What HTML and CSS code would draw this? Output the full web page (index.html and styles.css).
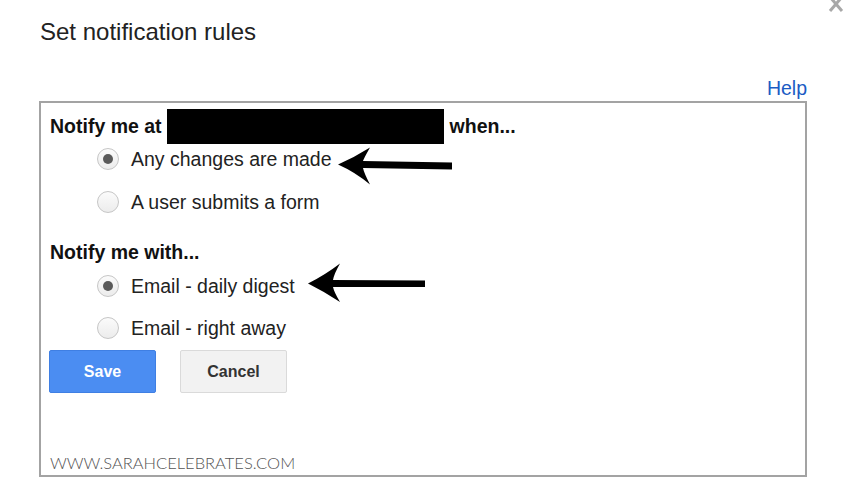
FILE: index.html
```html
<!DOCTYPE html>
<html lang="en">
<head>
<meta charset="utf-8">
<title>Set notification rules</title>
<link rel="stylesheet" href="styles.css">
</head>
<body>
<div class="page">
  <h1 class="title">Set notification rules</h1>
  <div class="help-row"><a class="help" href="#">Help</a></div>
  <div class="box">
    <div class="heading-row">
      <span class="label">Notify me at</span>
      <span class="redact"></span>
      <span class="label">when...</span>
    </div>
    <div class="options">
      <label class="option"><span class="radio checked"></span><span>Any changes are made</span></label>
      <label class="option"><span class="radio"></span><span>A user submits a form</span></label>
    </div>
    <div class="heading2 label">Notify me with...</div>
    <div class="options options2">
      <label class="option"><span class="radio checked"></span><span>Email - daily digest</span></label>
      <label class="option"><span class="radio"></span><span>Email - right away</span></label>
    </div>
    <div class="buttons">
      <button class="btn btn-save">Save</button>
      <button class="btn btn-cancel">Cancel</button>
    </div>
    <div class="watermark">WWW.SARAHCELEBRATES.COM</div>
  </div>
  <svg class="overlay" width="844" height="499" viewBox="0 0 844 499" aria-hidden="true">
    <path d="M338,164.5 Q355,157 370,147.5 Q364,158 363,161 L452,162.5 L452,169.5 L363,168 Q364,173 370,184.5 Q355,172 338,164.5 Z" fill="#000"/>
    <path d="M308,283.5 Q325,275 340,263.5 Q334,274 333,280 L425,280.5 L425,287 L333,287 Q334,292 340,302 Q325,292 308,283.5 Z" fill="#000"/>
    <g stroke="#a8a8a8" stroke-width="3" stroke-linecap="butt">
      <line x1="830" y1="-3" x2="842" y2="11"/>
      <line x1="842" y1="-3" x2="830" y2="11"/>
    </g>
  </svg>
</div>
</body>
</html>
```
FILE: styles.css
```css
html, body {
  margin: 0;
  padding: 0;
  background: #fff;
}
body {
  font-family: "Liberation Sans", Arial, sans-serif;
  color: #222;
}
.page {
  position: relative;
  width: 844px;
  height: 499px;
  overflow: hidden;
}
.title {
  margin: 0;
  padding: 18px 0 0 40px;
  font-size: 24px;
  font-weight: normal;
  line-height: 28px;
  color: #222;
}
.help-row {
  display: flex;
  justify-content: flex-end;
  padding: 30px 37px 0 0;
  height: 24px;
}
.help {
  font-size: 19.5px;
  line-height: 24px;
  color: #1a5cc4;
  text-decoration: none;
}
.box {
  box-sizing: border-box;
  margin: 1px 0 0 39px;
  width: 768px;
  height: 376px;
  border: 2px solid #a3a3a3;
  padding: 5px 0 0 9px;
  display: flex;
  flex-direction: column;
}
.label {
  font-weight: bold;
  font-size: 19.5px;
  color: #111;
}
.heading-row {
  display: flex;
  align-items: center;
  height: 36px;
}
.redact {
  display: block;
  width: 277px;
  height: 35px;
  background: #000;
  margin: 0 6px 0 5px;
}
.options {
  display: flex;
  flex-direction: column;
  gap: 13px;
  padding-left: 47px;
}
.options2 {
  margin-top: 4px;
  gap: 12px;
}
.option {
  display: flex;
  align-items: center;
  height: 30px;
  font-size: 19.5px;
  color: #222;
}
.radio {
  box-sizing: border-box;
  width: 22px;
  height: 22px;
  border-radius: 50%;
  border: 1px solid #c6c6c6;
  background: linear-gradient(#fbfbfb, #ececec);
  margin-right: 12px;
  display: flex;
  align-items: center;
  justify-content: center;
  margin-top: -1px;
}
.radio.checked::after {
  content: "";
  width: 10px;
  height: 10px;
  border-radius: 50%;
  background: #5a5a5a;
}
.heading2 {
  margin-top: 20px;
  height: 30px;
  line-height: 30px;
}
.buttons {
  display: flex;
  gap: 24px;
  margin-top: 7px;
  margin-left: -1px;
}
.btn {
  box-sizing: border-box;
  width: 107px;
  height: 43px;
  border-radius: 2px;
  font-family: "Liberation Sans", Arial, sans-serif;
  font-weight: bold;
  font-size: 16px;
  padding: 0;
}
.btn-save {
  background: #4b8df2;
  border: 1px solid #3f7fe3;
  color: #fff;
}
.btn-cancel {
  background: #f2f2f2;
  border: 1px solid #dadada;
  color: #333;
}
.watermark {
  margin-top: auto;
  padding-bottom: 2px;
  font-family: "Lato", sans-serif;
  font-weight: 300;
  font-size: 16.5px;
  line-height: 20px;
  letter-spacing: 0;
  color: #555;
}
.overlay {
  position: absolute;
  left: 0;
  top: 0;
  pointer-events: none;
}
```
